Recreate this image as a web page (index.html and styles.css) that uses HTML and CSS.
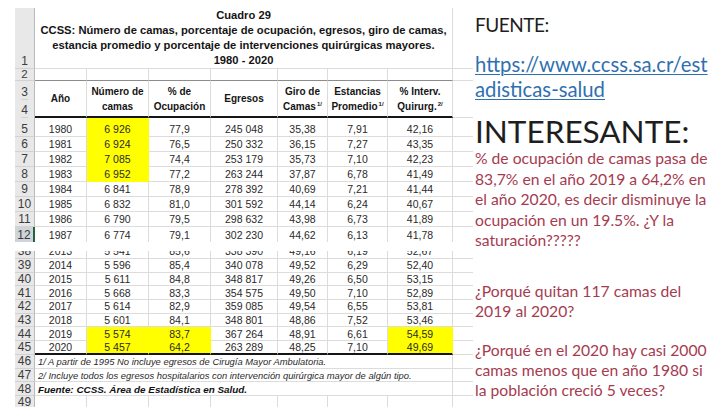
FILE: index.html
```html
<!DOCTYPE html>
<html lang="es">
<head>
<meta charset="utf-8">
<title>Cuadro 29 CCSS</title>
<link rel="stylesheet" href="styles.css">
</head>
<body>
<div class="page">
  <div class="sheet">
    <div class="block">
      <div class="row r-title">
        <div class="rh">1</div>
        <div class="title">Cuadro 29<br>CCSS: Número de camas, porcentaje de ocupación, egresos, giro de camas,<br>estancia promedio y porcentaje de intervenciones quirúrgicas mayores.<br>1980 - 2020</div>
        <div class="x"></div>
      </div>
      <div class="row r-blank">
        <div class="rh">2</div>
        <div class="c"></div><div class="c"></div><div class="c"></div><div class="c"></div><div class="c"></div><div class="c"></div><div class="c"></div>
        <div class="x"></div>
      </div>
      <div class="row r-head">
        <div class="rh2"><div class="l3">3</div><div class="l4">4</div></div>
        <div class="h"><span>Año</span></div>
        <div class="h"><span>Número de<br>camas</span></div>
        <div class="h"><span>% de<br>Ocupación</span></div>
        <div class="h"><span>Egresos</span></div>
        <div class="h"><span>Giro de<br>Camas<sup>1/</sup></span></div>
        <div class="h"><span>Estancias<br>Promedio<sup>1/</sup></span></div>
        <div class="h"><span>% Interv.<br>Quirurg.<sup>2/</sup></span></div>
        <div class="x"></div>
      </div>
      <div class="row r5">
        <div class="rh">5</div><div>1980</div><div class="y">6 926</div><div>77,9</div><div>245 048</div><div>35,38</div><div>7,91</div><div>42,16</div><div class="x"></div>
      </div>
      <div class="row rd">
        <div class="rh">6</div><div>1981</div><div class="y">6 924</div><div>76,5</div><div>250 332</div><div>36,15</div><div>7,27</div><div>43,35</div><div class="x"></div>
      </div>
      <div class="row rd">
        <div class="rh">7</div><div>1982</div><div class="y">7 085</div><div>74,4</div><div>253 179</div><div>35,73</div><div>7,10</div><div>42,23</div><div class="x"></div>
      </div>
      <div class="row rd">
        <div class="rh">8</div><div>1983</div><div class="y">6 952</div><div>77,2</div><div>263 244</div><div>37,87</div><div>6,78</div><div>41,49</div><div class="x"></div>
      </div>
      <div class="row rd">
        <div class="rh">9</div><div>1984</div><div>6 841</div><div>78,9</div><div>278 392</div><div>40,69</div><div>7,21</div><div>41,44</div><div class="x"></div>
      </div>
      <div class="row rd">
        <div class="rh">10</div><div>1985</div><div>6 832</div><div>81,0</div><div>301 592</div><div>44,14</div><div>6,24</div><div>40,67</div><div class="x"></div>
      </div>
      <div class="row rd">
        <div class="rh">11</div><div>1986</div><div>6 790</div><div>79,5</div><div>298 632</div><div>43,98</div><div>6,73</div><div>41,89</div><div class="x"></div>
      </div>
      <div class="row rd r12">
        <div class="rh sel">12</div><div>1987</div><div>6 774</div><div>79,1</div><div>302 230</div><div>44,62</div><div>6,13</div><div>41,78</div><div class="x"></div>
      </div>
    </div>

    <div class="block lower">
      <div class="row r38">
        <div class="rh">38</div><div>2013</div><div>5 541</div><div>85,6</div><div>338 390</div><div>49,16</div><div>6,19</div><div>52,67</div><div class="x"></div>
      </div>
      <div class="row rb">
        <div class="rh">39</div><div>2014</div><div>5 596</div><div>85,4</div><div>340 078</div><div>49,52</div><div>6,29</div><div>52,40</div><div class="x"></div>
      </div>
      <div class="row rb">
        <div class="rh">40</div><div>2015</div><div>5 611</div><div>84,8</div><div>348 817</div><div>49,26</div><div>6,50</div><div>53,15</div><div class="x"></div>
      </div>
      <div class="row rb">
        <div class="rh">41</div><div>2016</div><div>5 668</div><div>83,3</div><div>354 575</div><div>49,50</div><div>7,10</div><div>52,89</div><div class="x"></div>
      </div>
      <div class="row rb">
        <div class="rh">42</div><div>2017</div><div>5 614</div><div>82,9</div><div>359 085</div><div>49,54</div><div>6,55</div><div>53,81</div><div class="x"></div>
      </div>
      <div class="row rb">
        <div class="rh">43</div><div>2018</div><div>5 601</div><div>84,1</div><div>348 801</div><div>48,86</div><div>7,52</div><div>53,46</div><div class="x"></div>
      </div>
      <div class="row rb">
        <div class="rh">44</div><div>2019</div><div class="y">5 574</div><div class="y">83,7</div><div>367 264</div><div>48,91</div><div>6,61</div><div class="y">54,59</div><div class="x"></div>
      </div>
      <div class="row rb r45">
        <div class="rh">45</div><div>2020</div><div class="y">5 457</div><div class="y">64,2</div><div>263 289</div><div>48,25</div><div>7,10</div><div class="y">49,69</div><div class="x"></div>
      </div>
      <div class="row rb">
        <div class="rh">46</div><div class="fn">1/ A partir de 1995 No incluye egresos de Cirugía Mayor Ambulatoria.</div><div class="x"></div>
      </div>
      <div class="row rb">
        <div class="rh">47</div><div class="fn">2/ Incluye todos los egresos hospitalarios con intervención quirúrgica mayor de algún tipo.</div><div class="x"></div>
      </div>
      <div class="row rb">
        <div class="rh">48</div><div class="fn src">Fuente: CCSS. Área de Estadística en Salud.</div><div class="x"></div>
      </div>
      <div class="row rb">
        <div class="rh">49</div><div></div><div></div><div></div><div></div><div></div><div></div><div></div><div class="x"></div>
      </div>
    </div>
  </div>

  <div class="notes">
    <p class="lbl">FUENTE:</p>
    <p class="url"><span>https://www.ccss.sa.cr/est</span><br><span>adisticas-salud</span></p>
    <p class="big">INTERESANTE:</p>
    <p class="red p1">% de ocupación de camas pasa de<br>83,7% en el año 2019 a 64,2% en<br>el año 2020, es decir disminuye la<br>ocupación en un 19.5%. ¿Y la<br>saturación?????</p>
    <p class="red p2">¿Porqué quitan 117 camas del<br>2019 al 2020?</p>
    <p class="red p3">¿Porqué en el 2020 hay casi 2000<br>camas menos que en año 1980 si<br>la población creció 5 veces?</p>
  </div>
</div>
</body>
</html>
```
FILE: styles.css
```css
* { box-sizing: border-box; margin: 0; padding: 0; }
html, body { background: #fff; }
body { width: 720px; height: 407px; overflow: hidden; }

.page { display: flex; align-items: flex-start; padding-left: 15px; }

.sheet {
  width: 458px;
  padding-top: 8px;
  font-family: "Liberation Sans", Arial, sans-serif;
  color: #2a2a2a;
}
.lower { margin-top: 9.5px; }

.row {
  display: grid;
  grid-template-columns: 20px 52px 62px 62px 67px 50px 60px 65px 20px;
}
.row > div {
  display: flex;
  align-items: flex-end;
  justify-content: center;
  border-right: 1px solid #dcdcdc;
  border-bottom: 1px solid #dcdcdc;
  font-size: 10.5px;
  line-height: 13px;
  white-space: nowrap;
  overflow: hidden;
}
.row > .rh {
  background: #e8e8e8;
  border-right-color: #b9b9b9;
  border-bottom-color: #d2d2d2;
  font-size: 12px;
  color: #3c3c3c;
}
.row > .rh.sel {
  background: #cfd4d8;
  border-right: 2px solid #2b6140;
}
.row > .x { border-right: none; }

.r-title { height: 61px; }
.row > .title {
  grid-column: 2 / 9;
  display: block;
  text-align: center;
  font-weight: bold;
  font-size: 11.2px;
  line-height: 15px;
  color: #151515;
}
.r-blank { height: 12px; }
.r-blank > div { line-height: 11px; }
.r-blank > .rh { align-items: center; font-size: 11.5px; overflow: visible; }
.r-blank > .c { border-bottom-color: #8c8c8c; }

.r-head { height: 37px; }
.row > .rh2 {
  display: grid;
  grid-template-rows: 19px 18px;
  border: none;
  border-right: 1px solid #b9b9b9;
  background: #e8e8e8;
}
.rh2 > div {
  display: flex;
  justify-content: center;
  font-size: 12px;
  line-height: 13px;
  color: #3c3c3c;
  border-bottom: 1px solid #d2d2d2;
}
.rh2 > .l3 { align-items: flex-end; }
.rh2 > .l4 { align-items: center; }
.row > .h {
  align-items: center;
  text-align: center;
  font-weight: bold;
  font-size: 10px;
  line-height: 15px;
  color: #151515;
  border-bottom: 2px solid #151515;
}
.h sup {
  font-size: 6px;
  line-height: 0;
  vertical-align: 4px;
  margin-left: 1px;
}

.r5 { height: 18.5px; }
.rd { height: 15px; }
.r12 > div { border-bottom: none; }

.row > .y {
  background: #ffff00;
  border-right-color: #ffff00;
  border-bottom-color: #ffff00;
}

.r38 { height: 7.8px; }
.rb { height: 13.73px; }
.rb > div { align-items: center; padding-top: 1px; }
.row.r45 > div:not(.rh):not(.x) { border-bottom: 2px solid #151515; }

.row > .fn {
  grid-column: 2 / 9;
  justify-content: flex-start;
  padding-left: 3px;
  font-style: italic;
  font-size: 9.4px;
  color: #2a2a2a;
}
.row > .fn.src {
  font-weight: bold;
  font-size: 9.9px;
  color: #111;
}

.notes {
  margin-left: 2px;
  width: 245px;
  padding-top: 12px;
  font-family: Lato, "Open Sans", sans-serif;
  white-space: nowrap;
}
.lbl { font-size: 19px; letter-spacing: -0.5px; line-height: 26px; color: #1e1e1e; }
.url {
  margin-top: 14px;
  font-size: 20.3px;
  line-height: 25px;
  color: #2f70b0;
}
.url span { text-decoration: underline; text-underline-offset: 2px; text-decoration-thickness: 1px; }
.big { margin-top: 12px; font-size: 31.5px; line-height: 34px; color: #1e1e1e; }
.red { color: #a63b50; font-size: 15.7px; line-height: 20.5px; }
.p1 { margin-top: 0; }
.p2 { margin-top: 30px; line-height: 20px; }
.p3 { margin-top: 19px; line-height: 20px; }
```
